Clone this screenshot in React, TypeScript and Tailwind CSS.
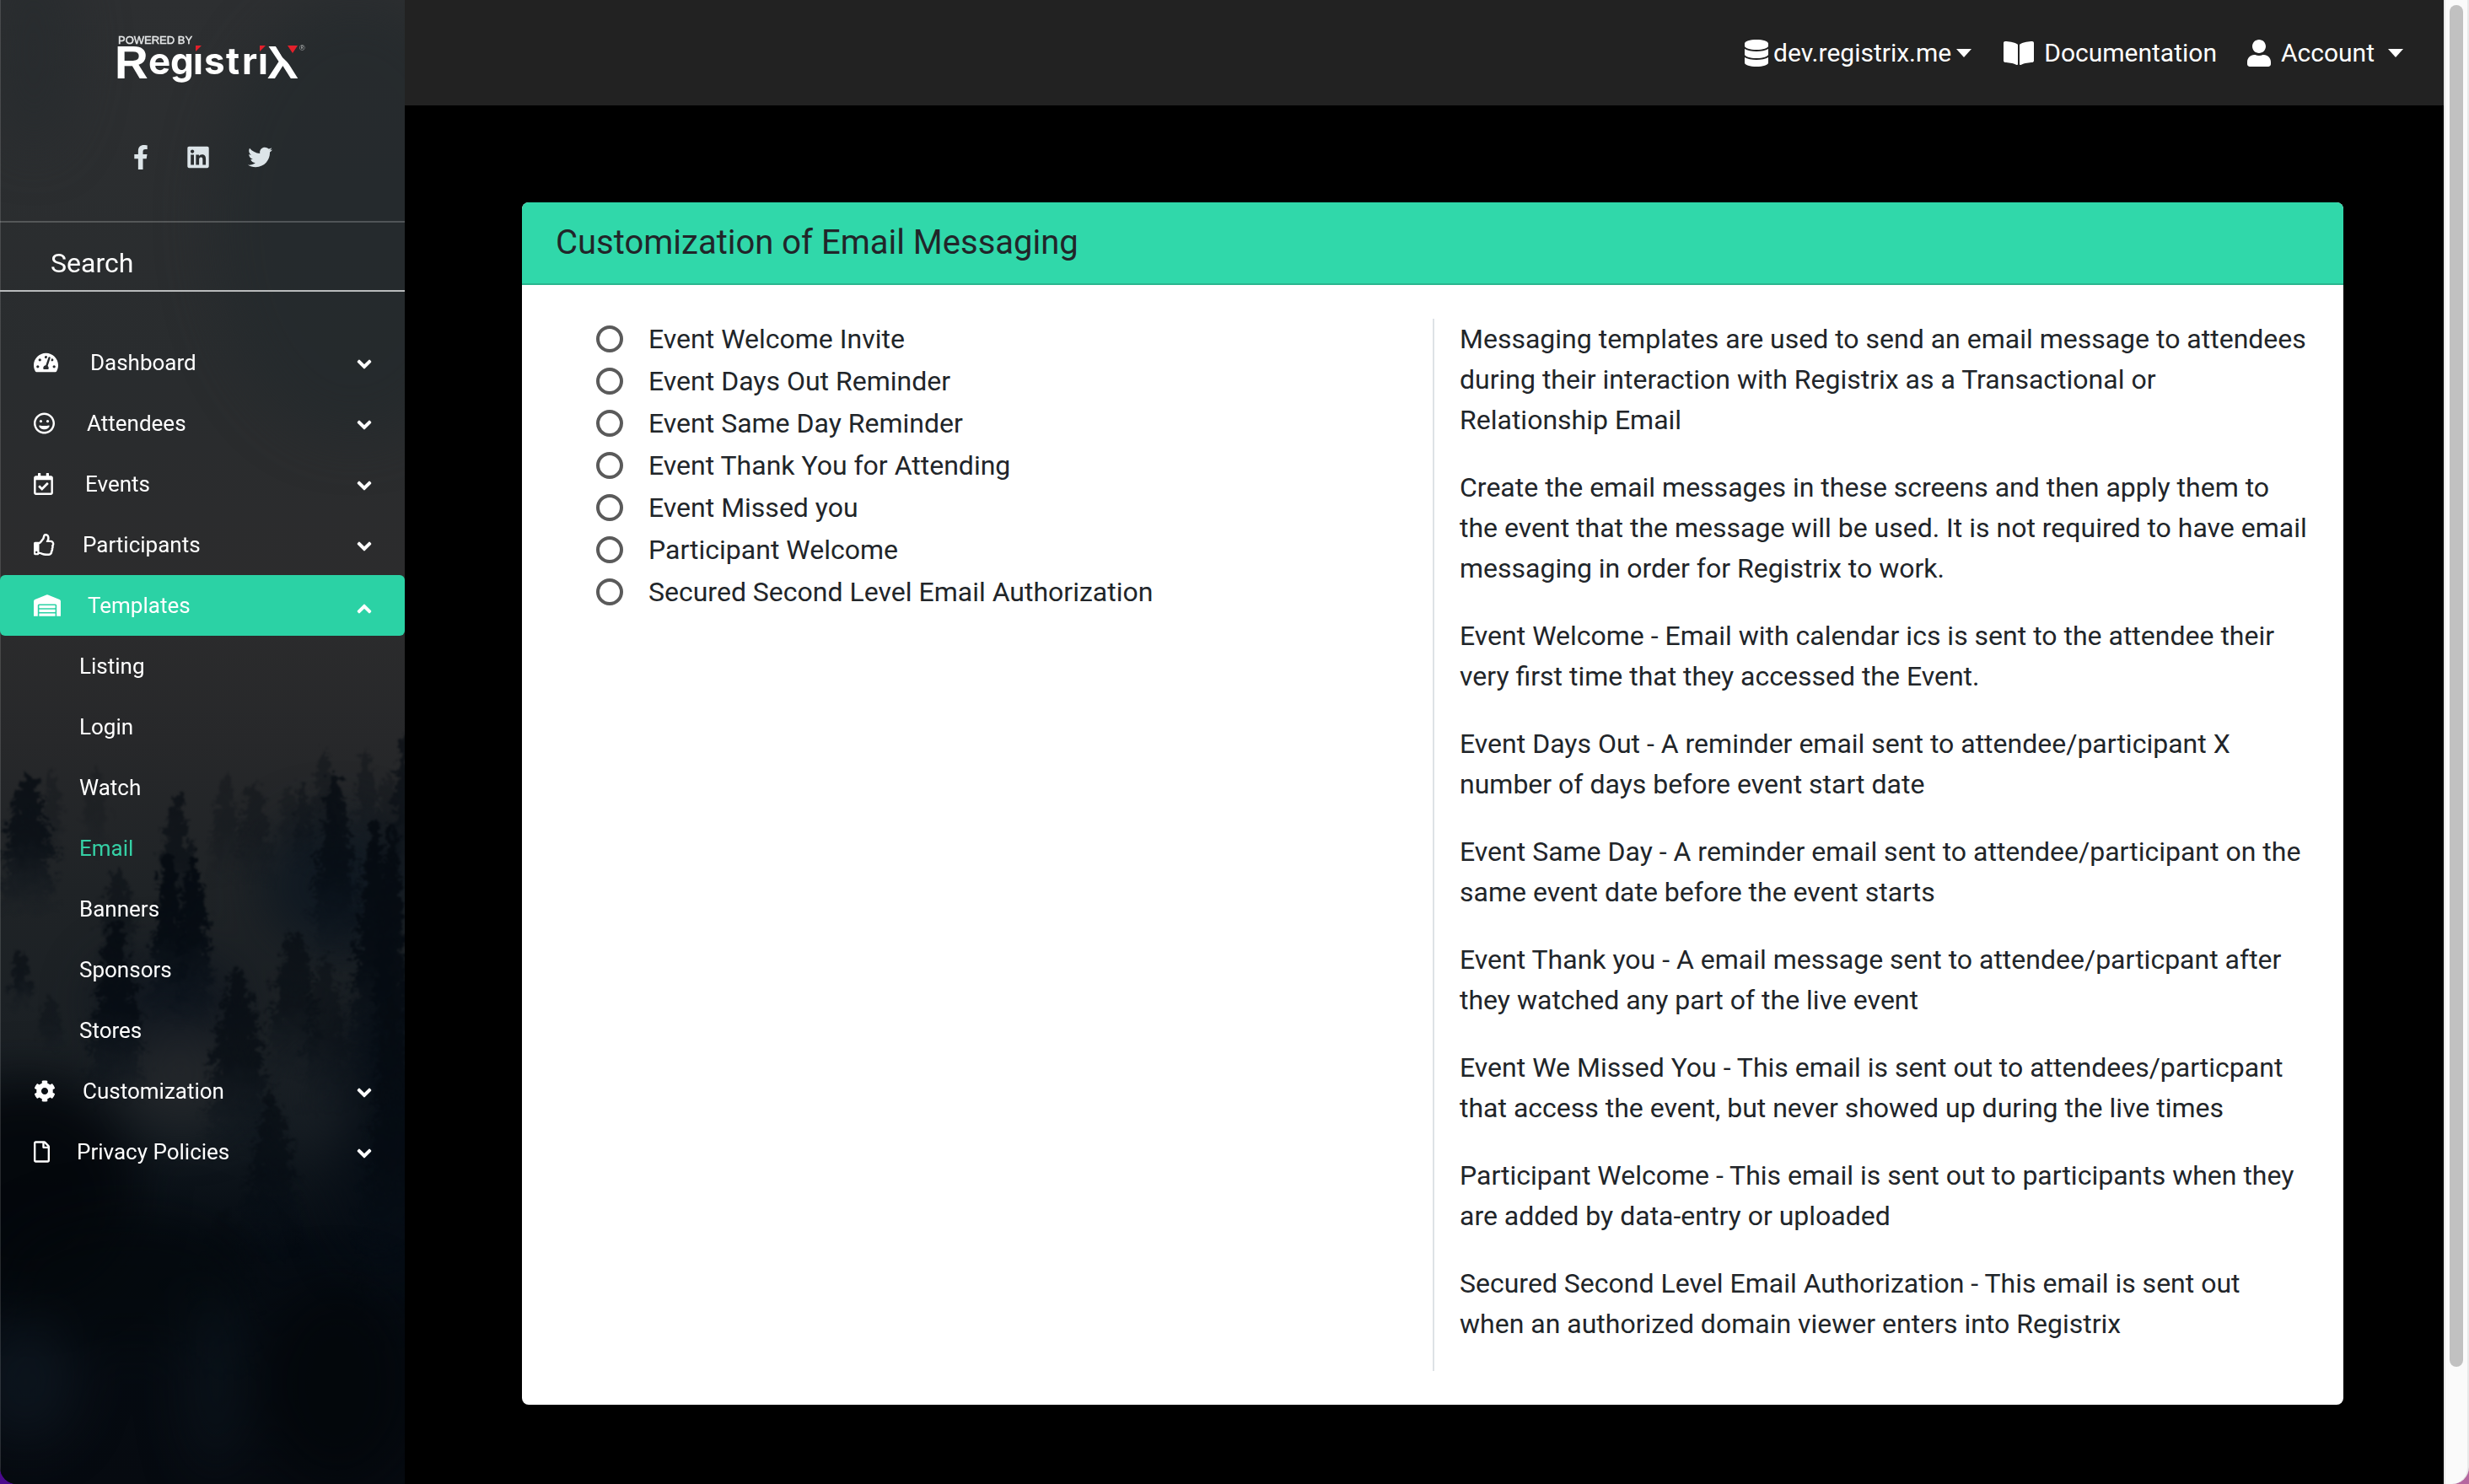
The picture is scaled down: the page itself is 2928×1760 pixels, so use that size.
import React, { useState } from "react";
import type { IconType } from "react-icons";
import {
  FaBookOpen,
  FaChevronDown,
  FaChevronUp,
  FaCog,
  FaDatabase,
  FaFacebookF,
  FaLinkedin,
  FaRegCalendarCheck,
  FaRegFile,
  FaRegGrin,
  FaRegThumbsUp,
  FaTachometerAlt,
  FaTwitter,
  FaUser,
  FaWarehouse,
} from "react-icons/fa";

type NavEntry = {
  label: string;
  icon: IconType;
  size: string;
  gap: string;
  children?: string[];
};

const NAV: NavEntry[] = [
  { label: "Dashboard", icon: FaTachometerAlt, size: "w-[29px]", gap: "gap-[38px]" },
  { label: "Attendees", icon: FaRegGrin, size: "w-[25px]", gap: "gap-[38px]" },
  { label: "Events", icon: FaRegCalendarCheck, size: "w-[23px]", gap: "gap-[38px]" },
  { label: "Participants", icon: FaRegThumbsUp, size: "w-[26px]", gap: "gap-8" },
  {
    label: "Templates",
    icon: FaWarehouse,
    size: "w-[32px]",
    gap: "gap-8",
    children: ["Listing", "Login", "Watch", "Email", "Banners", "Sponsors", "Stores"],
  },
  { label: "Customization", icon: FaCog, size: "w-[26px]", gap: "gap-8" },
  { label: "Privacy Policies", icon: FaRegFile, size: "w-[19px]", gap: "gap-8" },
];

const OPTIONS = [
  "Event Welcome Invite",
  "Event Days Out Reminder",
  "Event Same Day Reminder",
  "Event Thank You for Attending",
  "Event Missed you",
  "Participant Welcome",
  "Secured Second Level Email Authorization",
];

const NOTES = [
  "Messaging templates are used to send an email message to attendees during their interaction with Registrix as a Transactional or Relationship Email",
  "Create the email messages in these screens and then apply them to the event that the message will be used. It is not required to have email messaging in order for Registrix to work.",
  "Event Welcome - Email with calendar ics is sent to the attendee their very first time that they accessed the Event.",
  "Event Days Out - A reminder email sent to attendee/participant X number of days before event start date",
  "Event Same Day - A reminder email sent to attendee/participant on the same event date before the event starts",
  "Event Thank you - A email message sent to attendee/particpant after they watched any part of the live event",
  "Event We Missed You - This email is sent out to attendees/particpant that access the event, but never showed up during the live times",
  "Participant Welcome - This email is sent out to participants when they are added by data-entry or uploaded",
  "Secured Second Level Email Authorization - This email is sent out when an authorized domain viewer enters into Registrix",
];

// x, top, width, height, opacity
const TREES: [number, number, number, number, number][] = [
  [62, 912, 36, 110, 0.25],
  [114, 908, 40, 110, 0.2],
  [267, 920, 50, 130, 0.3],
  [302, 924, 60, 130, 0.35],
  [343, 932, 36, 90, 0.25],
  [360, 928, 34, 110, 0.4],
  [385, 888, 50, 140, 0.35],
  [434, 886, 40, 130, 0.35],
  [460, 915, 50, 150, 0.3],
  [33, 915, 86, 170, 0.8],
  [210, 942, 60, 160, 0.65],
  [398, 915, 74, 240, 0.8],
  [480, 872, 50, 200, 0.7],
  [140, 1028, 60, 120, 0.5],
  [200, 1012, 60, 200, 1],
  [229, 1010, 60, 210, 1],
  [444, 970, 74, 340, 1],
  [464, 976, 66, 420, 1],
  [25, 1128, 34, 70, 0.6],
  [60, 1178, 34, 70, 0.35],
  [138, 1090, 84, 220, 0.9],
  [350, 1100, 84, 180, 0.65],
  [386, 1132, 76, 190, 0.45],
  [282, 1145, 100, 230, 0.75],
  [466, 1180, 100, 420, 0.8],
  [322, 1295, 84, 200, 0.65],
  [265, 1435, 100, 200, 0.45],
];

function conifer(x: number, top: number, width: number, height: number) {
  const steps = Math.max(7, Math.round(height / 9));
  const left: string[] = [];
  const right: string[] = [];
  for (let i = 1; i <= steps; i++) {
    const t = i / steps;
    const wobble = 0.65 + 0.35 * Math.abs(Math.sin(i * 2.3 + x));
    const reach = (width / 2) * Math.min(1, Math.pow(t, 0.6) * 1.35) * wobble;
    const y = top + height * t;
    left.push(`L${x - reach} ${y} L${x - reach * 0.55} ${y - 1}`);
    right.unshift(`L${x + reach * 0.55} ${y - 3} L${x + reach * 0.95} ${y - 2}`);
  }
  return `M${x} ${top} ${left.join(" ")} ${right.join(" ")} Z`;
}

function ForestBackdrop() {
  return (
    <svg
      aria-hidden="true"
      viewBox="0 0 480 1760"
      preserveAspectRatio="xMidYMin slice"
      className="absolute inset-0 h-full w-full"
    >
      <defs>
        <linearGradient id="sky" x1="0" y1="0" x2="0" y2="1">
          <stop offset="0" stopColor="#2d2f31" />
          <stop offset="0.25" stopColor="#292c2e" />
          <stop offset="0.4" stopColor="#2c2c2d" />
          <stop offset="0.5" stopColor="#27282a" />
          <stop offset="0.6" stopColor="#1f2326" />
          <stop offset="0.7" stopColor="#1b2024" />
          <stop offset="0.76" stopColor="#131a20" />
          <stop offset="0.84" stopColor="#060c13" />
          <stop offset="1" stopColor="#060a10" />
        </linearGradient>
        <linearGradient id="needle" x1="0" y1="0" x2="0" y2="1">
          <stop offset="0" stopColor="#070c12" />
          <stop offset="0.5" stopColor="#050b12" stopOpacity="0.9" />
          <stop offset="1" stopColor="#08111b" stopOpacity="0" />
        </linearGradient>
        <filter
          id="fog"
          filterUnits="userSpaceOnUse"
          x="-200"
          y="-200"
          width="880"
          height="2160"
          colorInterpolationFilters="sRGB"
        >
          <feGaussianBlur stdDeviation="30" />
        </filter>
        <filter
          id="foliage"
          filterUnits="userSpaceOnUse"
          x="-60"
          y="800"
          width="600"
          height="960"
          colorInterpolationFilters="sRGB"
        >
          <feTurbulence type="fractalNoise" baseFrequency="0.09" numOctaves="3" seed="4" result="noise" />
          <feDisplacementMap in="SourceGraphic" in2="noise" scale="26" xChannelSelector="R" yChannelSelector="G" />
          <feGaussianBlur stdDeviation="1" />
        </filter>
      </defs>
      <rect width="480" height="1760" fill="url(#sky)" />
      <g filter="url(#fog)">
        <ellipse cx="420" cy="260" rx="170" ry="260" fill="#24292c" opacity="0.7" />
        <ellipse cx="40" cy="60" rx="50" ry="120" fill="#262b2e" opacity="0.7" />
        <ellipse cx="400" cy="1050" rx="90" ry="80" fill="#0d1620" opacity="0.8" />
        <ellipse cx="200" cy="1190" rx="90" ry="60" fill="#0b131c" opacity="0.7" />
        <ellipse cx="30" cy="1410" rx="130" ry="130" fill="#03070b" opacity="0.9" />
        <ellipse cx="450" cy="1340" rx="60" ry="160" fill="#060d15" opacity="0.85" />
        <ellipse cx="215" cy="1280" rx="70" ry="60" fill="#24282b" opacity="0.85" />
        <ellipse cx="380" cy="1300" rx="40" ry="70" fill="#1b2127" opacity="0.7" />
      </g>
      <g filter="url(#foliage)">
        {TREES.map(([x, top, width, height, opacity]) => (
          <path
            key={`${x}-${top}`}
            d={conifer(x, top, width, height)}
            fill="url(#needle)"
            opacity={opacity}
          />
        ))}
      </g>
      <g filter="url(#fog)">
        <ellipse cx="150" cy="1520" rx="150" ry="80" fill="#04080c" opacity="0.6" />
        <ellipse cx="30" cy="1640" rx="60" ry="70" fill="#111b25" opacity="0.6" />
        <ellipse cx="255" cy="1640" rx="30" ry="110" fill="#0e1720" opacity="0.6" />
        <ellipse cx="400" cy="1640" rx="90" ry="120" fill="#03060a" opacity="0.8" />
      </g>
      <rect width="1" height="1760" fill="#ffffff" opacity="0.14" />
    </svg>
  );
}

function Logo() {
  return (
    <svg
      viewBox="-6 0 240 72"
      className="h-[72px] w-[240px] overflow-visible"
      role="img"
      aria-label="Powered by RegistriX"
    >
      <defs>
        <clipPath id="stems">
          <path d="M30 10H88V64H30Z M88 24H102V64H88Z M102 10H164V64H102Z M164 24H180V64H164Z" />
        </clipPath>
        <clipPath id="cross">
          <path d="M172 8H183L195.4 28.5L201 34L224 60H172Z" />
        </clipPath>
      </defs>
      <text
        x="0"
        y="12"
        fill="#e6e8e9"
        stroke="#e6e8e9"
        strokeWidth="0.4"
        className="font-['Liberation_Sans'] text-[13px]"
      >
        POWERED BY
      </text>
      <text x="-4" y="53" fill="#ffffff" className="font-['Liberation_Sans'] text-[55px] font-bold">
        R
      </text>
      <text
        x="36 62 89 102 128 147 166"
        y="48"
        fill="#ffffff"
        clipPath="url(#stems)"
        className="font-['Inter'] text-[44px] font-bold"
      >
        egistri
      </text>
      <text
        x="177"
        y="53"
        fill="#ffffff"
        clipPath="url(#cross)"
        className="font-['Liberation_Sans'] text-[55px] font-bold"
      >
        X
      </text>
      <path d="M92 14H99L92 21Z M168 14H175L168 21Z M201 14H213L207 23Z" fill="#e3202b" />
      <text x="215" y="20" fill="#b9bbbc" className="font-['Liberation_Sans'] text-[9px]">
        ®
      </text>
    </svg>
  );
}

function Caret() {
  return (
    <svg viewBox="0 0 18 10" className="h-[10px] w-[18px]" aria-hidden="true">
      <path d="M0 0H18L9 10Z" fill="currentColor" />
    </svg>
  );
}

function Sidebar() {
  const [open, setOpen] = useState("Templates");
  return (
    <aside className="relative w-[480px] shrink-0 overflow-hidden rounded-bl-[20px] bg-[#0a0f15] text-white">
      <ForestBackdrop />
      <div className="relative">
        <div className="flex h-[264px] flex-col items-center border-b-2 border-white/20 pt-10">
          <a href="#home" className="ml-7">
            <Logo />
          </a>
          <div className="mt-[60px] flex items-center gap-[46px] text-[#dce4e8]">
            <a href="#facebook" aria-label="Facebook">
              <FaFacebookF className="h-[29px] w-[18px]" />
            </a>
            <a href="#linkedin" aria-label="LinkedIn">
              <FaLinkedin className="h-[29px] w-[26px]" />
            </a>
            <a href="#twitter" aria-label="Twitter">
              <FaTwitter className="h-[29px] w-[29px]" />
            </a>
          </div>
        </div>
        <input
          type="search"
          aria-label="Search"
          placeholder="Search"
          className="block h-[82px] w-full border-b-2 border-[#b9bbbc] bg-transparent px-[60px] pt-4 text-[32px] text-white outline-none placeholder:text-white placeholder:opacity-100"
        />
        <nav className="pt-12 text-[26px]">
          {NAV.map(({ label, icon: Icon, size, gap, children }) => {
            const active = open === label;
            return (
              <div key={label}>
                <button
                  type="button"
                  aria-expanded={active}
                  onClick={() => setOpen(active ? "" : label)}
                  className={
                    active
                      ? "flex h-[72px] w-full items-center justify-between rounded-md bg-[#2bd2a5] px-10"
                      : "flex h-[72px] w-full items-center justify-between px-10"
                  }
                >
                  <span className={`flex items-center ${gap}`}>
                    <Icon className={`h-[26px] ${size}`} />
                    {label}
                  </span>
                  {active ? (
                    <FaChevronUp className="mt-2 h-[18px] w-4 overflow-visible stroke-current stroke-[36px]" />
                  ) : (
                    <FaChevronDown className="mt-1 h-[18px] w-4 overflow-visible stroke-current stroke-[36px]" />
                  )}
                </button>
                {active && children && (
                  <ul>
                    {children.map((child) => (
                      <li key={child}>
                        <a
                          href={`#${child.toLowerCase()}`}
                          className={
                            child === "Email"
                              ? "flex h-[72px] items-center pl-[94px] text-[#35d0a5]"
                              : "flex h-[72px] items-center pl-[94px]"
                          }
                        >
                          {child}
                        </a>
                      </li>
                    ))}
                  </ul>
                )}
              </div>
            );
          })}
        </nav>
      </div>
    </aside>
  );
}

function TopBar() {
  return (
    <header className="flex h-[125px] items-center justify-end bg-[#222222] pr-12 text-[30px] text-white">
      <button type="button" className="flex items-center">
        <FaDatabase className="mr-1.5 h-8 w-7" />
        dev.registrix.me
        <span className="ml-1.5">
          <Caret />
        </span>
      </button>
      <a href="#documentation" className="ml-[38px] flex items-center gap-3">
        <FaBookOpen className="h-8 w-9" />
        Documentation
      </a>
      <button type="button" className="ml-[36px] flex items-center gap-3">
        <FaUser className="h-8 w-7" />
        Account
        <span className="ml-1">
          <Caret />
        </span>
      </button>
    </header>
  );
}

function MessagingCard() {
  return (
    <section className="overflow-hidden rounded-lg bg-white text-[#212529]">
      <div className="h-[98px] border-b-2 border-[#2ab58e] bg-[#30d8aa] px-10 pt-6">
        <h1 id="card-title" className="text-[40px] leading-12">
          Customization of Email Messaging
        </h1>
      </div>
      <div className="grid grid-cols-2 py-10">
        <fieldset aria-labelledby="card-title" className="flex flex-col gap-0.5 pl-[88px]">
          {OPTIONS.map((option) => (
            <label key={option} className="flex h-12 items-center gap-[30px] text-[32px]">
              <input
                type="radio"
                name="message"
                className="h-8 w-8 shrink-0 appearance-none rounded-full border-4 border-[#5a5a5a] bg-white checked:bg-[#30d8aa]"
              />
              {option}
            </label>
          ))}
        </fieldset>
        <div className="border-l-2 border-[#dee2e6] pr-10 pl-[30px] text-[32px] leading-12">
          {NOTES.map((note) => (
            <p key={note} className="mb-8">
              {note}
            </p>
          ))}
        </div>
      </div>
    </section>
  );
}

export default function App() {
  return (
    <div className="flex min-h-screen bg-linear-to-r from-[#4b0a8c] from-50% to-[#b5679f] to-50% font-['Roboto',sans-serif]">
      <Sidebar />
      <main className="min-w-0 flex-1 bg-black">
        <TopBar />
        <div className="pt-[115px] pr-[119px] pb-[94px] pl-[139px]">
          <MessagingCard />
        </div>
      </main>
      <div
        aria-hidden="true"
        className="flex w-[30px] shrink-0 justify-center rounded-br-[20px] border-x-2 border-[#e8e8e8] bg-[#fafafa] pt-1.5"
      >
        <div className="h-[1615px] w-4 rounded-full bg-[#c1c1c1]" />
      </div>
    </div>
  );
}
